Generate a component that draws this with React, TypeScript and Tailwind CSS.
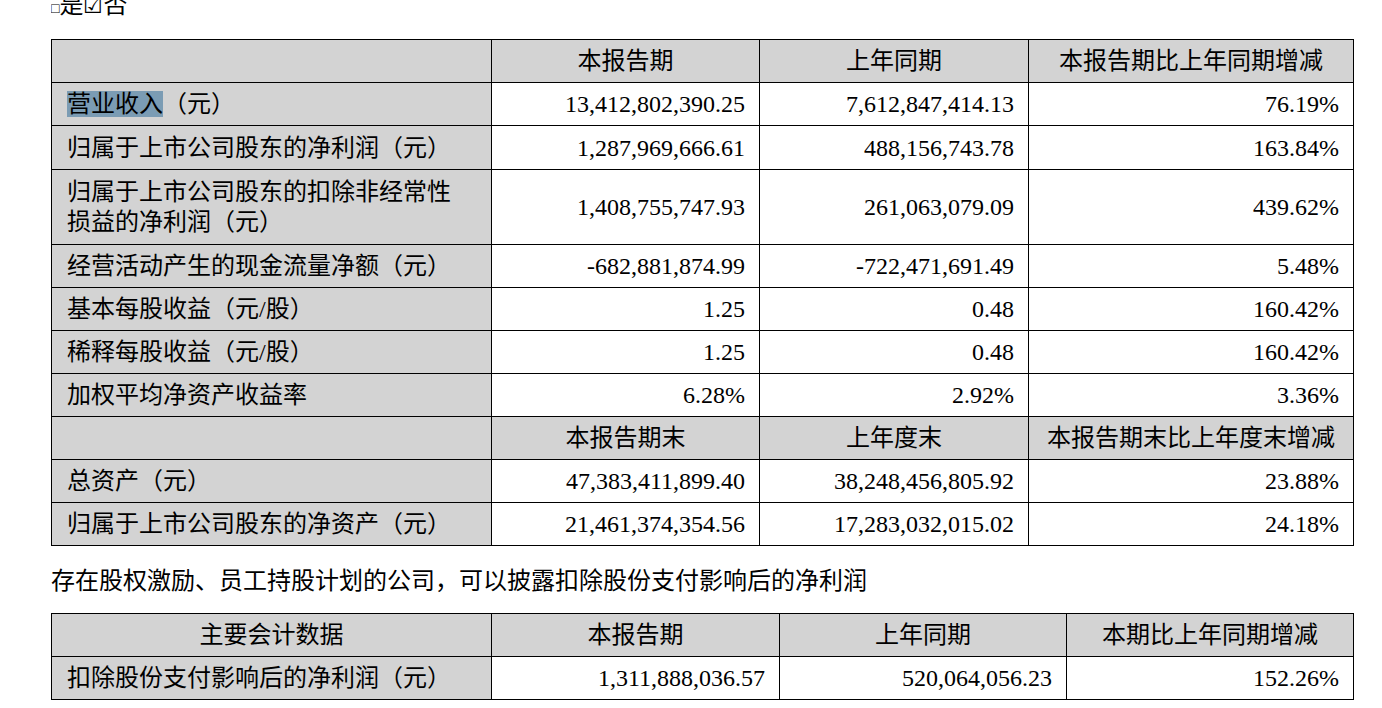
// Key financial data table (annual report excerpt).

type Row = {
  label: string;
  cur: string;
  prev: string;
  change: string;
  h?: string;
  highlight?: boolean;
};

const rowsA: Row[] = [
  { label: "营业收入（元）", cur: "13,412,802,390.25", prev: "7,612,847,414.13", change: "76.19%", highlight: true },
  { label: "归属于上市公司股东的净利润（元）", cur: "1,287,969,666.61", prev: "488,156,743.78", change: "163.84%", h: "h-[44px]" },
  { label: "归属于上市公司股东的扣除非经常性损益的净利润（元）", cur: "1,408,755,747.93", prev: "261,063,079.09", change: "439.62%", h: "h-[75px]" },
  { label: "经营活动产生的现金流量净额（元）", cur: "-682,881,874.99", prev: "-722,471,691.49", change: "5.48%" },
  { label: "基本每股收益（元/股）", cur: "1.25", prev: "0.48", change: "160.42%" },
  { label: "稀释每股收益（元/股）", cur: "1.25", prev: "0.48", change: "160.42%" },
  { label: "加权平均净资产收益率", cur: "6.28%", prev: "2.92%", change: "3.36%" },
];

const rowsB: Row[] = [
  { label: "总资产（元）", cur: "47,383,411,899.40", prev: "38,248,456,805.92", change: "23.88%" },
  { label: "归属于上市公司股东的净资产（元）", cur: "21,461,374,354.56", prev: "17,283,032,015.02", change: "24.18%" },
];

const cell = "border border-black align-middle";
const gray = "bg-[#d3d3d3]";

function HeaderRow({ cols, first = "" }: { cols: string[]; first?: string }): React.ReactElement {
  return (
    <tr className="h-[43px]">
      <td className={`${cell} ${gray} text-center`}>{first}</td>
      {cols.map((c) => (
        <td key={c} className={`${cell} ${gray} text-center`}>
          {c}
        </td>
      ))}
    </tr>
  );
}

function DataRow({ row }: { row: Row }): React.ReactElement {
  return (
    <tr className={row.h ?? "h-[43px]"}>
      <td className={`${cell} ${gray} pl-[15px] pr-[30px] leading-[30px]`}>
        {row.highlight ? (
          <>
            <span className="bg-[#7b9cb4]">营业收入</span>（元）
          </>
        ) : (
          row.label
        )}
      </td>
      <td className={`${cell} text-right pr-[14px]`}>{row.cur}</td>
      <td className={`${cell} text-right pr-[14px]`}>{row.prev}</td>
      <td className={`${cell} text-right pr-[14px]`}>{row.change}</td>
    </tr>
  );
}

export default function App(): React.ReactElement {
  return (
    <div className="w-[1382px] h-[708px] overflow-hidden bg-white text-black text-[24px] font-['Liberation_Serif','Noto_Sans_CJK_SC',serif] pl-[51px]">
      <div className="h-[39px] overflow-hidden">
        <p className="-mt-[7px] leading-[24px]">
          <span className="text-[14px]">□</span>是<span className="text-[22px]">☑</span>否
        </p>
      </div>

      <table className="table-fixed border-collapse w-[1302px]">
        <colgroup>
          <col className="w-[440px]" />
          <col className="w-[268px]" />
          <col className="w-[269px]" />
          <col className="w-[325px]" />
        </colgroup>
        <tbody>
          <HeaderRow cols={["本报告期", "上年同期", "本报告期比上年同期增减"]} />
          {rowsA.map((r) => (
            <DataRow key={r.label} row={r} />
          ))}
          <HeaderRow cols={["本报告期末", "上年度末", "本报告期末比上年度末增减"]} />
          {rowsB.map((r) => (
            <DataRow key={r.label} row={r} />
          ))}
        </tbody>
      </table>

      <div className="h-[67px] flex items-center pt-[2px]">
        <p className="leading-[30px]">存在股权激励、员工持股计划的公司，可以披露扣除股份支付影响后的净利润</p>
      </div>

      <table className="table-fixed border-collapse w-[1302px]">
        <colgroup>
          <col className="w-[440px]" />
          <col className="w-[288px]" />
          <col className="w-[287px]" />
          <col className="w-[287px]" />
        </colgroup>
        <tbody>
          <HeaderRow first="主要会计数据" cols={["本报告期", "上年同期", "本期比上年同期增减"]} />
          <tr className="h-[43px]">
            <td className={`${cell} ${gray} pl-[15px]`}>扣除股份支付影响后的净利润（元）</td>
            <td className={`${cell} text-right pr-[14px]`}>1,311,888,036.57</td>
            <td className={`${cell} text-right pr-[14px]`}>520,064,056.23</td>
            <td className={`${cell} text-right pr-[14px]`}>152.26%</td>
          </tr>
        </tbody>
      </table>
    </div>
  );
}
